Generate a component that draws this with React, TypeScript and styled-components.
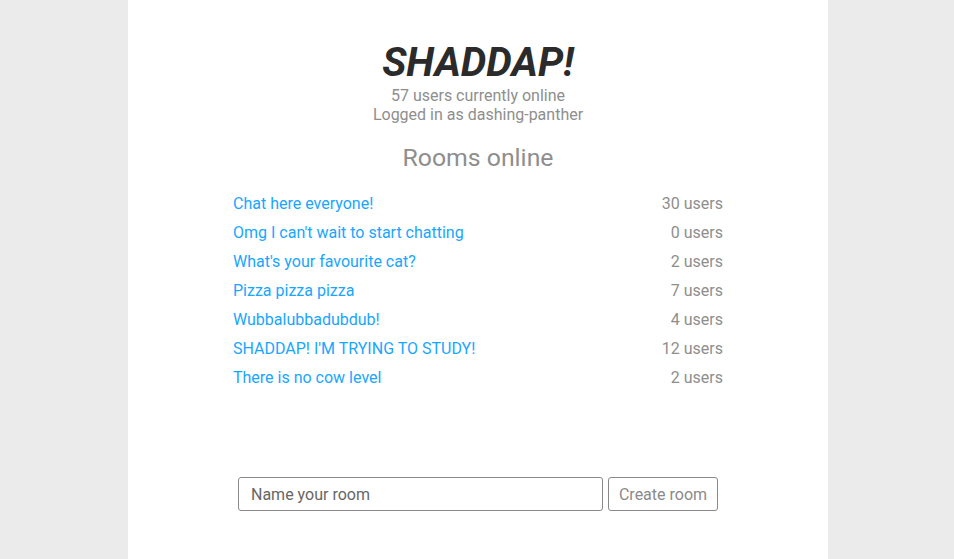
import React from 'react';
import styled, { createGlobalStyle } from 'styled-components';

type Room = {
  name: string;
  users: number;
};

const rooms: Room[] = [
  { name: 'Chat here everyone!', users: 30 },
  { name: "Omg I can't wait to start chatting", users: 0 },
  { name: "What's your favourite cat?", users: 2 },
  { name: 'Pizza pizza pizza', users: 7 },
  { name: 'Wubbalubbadubdub!', users: 4 },
  { name: "SHADDAP! I'M TRYING TO STUDY!", users: 12 },
  { name: 'There is no cow level', users: 2 },
];

const GlobalStyle = createGlobalStyle`
  html, body {
    margin: 0;
    padding: 0;
    background: #ebebeb;
    font-family: Roboto, 'Liberation Sans', sans-serif;
  }
`;

const App = () => {
  return (
    <>
      <GlobalStyle />
      <Page>
        <Header>
          <Title>SHADDAP!</Title>
          <Info>57 users currently online</Info>
          <Info>Logged in as dashing-panther</Info>
        </Header>
        <RoomsTitle>Rooms online</RoomsTitle>
        <RoomList>
          {rooms.map(room => (
            <RoomRow key={room.name}>
              <RoomLink href="#">{room.name}</RoomLink>
              <RoomUsers>{room.users} users</RoomUsers>
            </RoomRow>
          ))}
        </RoomList>
        <CreateForm onSubmit={e => e.preventDefault()}>
          <RoomInput placeholder="Name your room" />
          <CreateButton type="submit">Create room</CreateButton>
        </CreateForm>
      </Page>
    </>
  );
};

const Page = styled.div`
  width: 700px;
  min-height: 100vh;
  margin-left: calc(50% - 349px);
  background: #fff;
  display: flex;
  flex-direction: column;
  align-items: center;
  padding-top: 38px;
  box-sizing: border-box;
`;

const Header = styled.header`
  display: flex;
  flex-direction: column;
  align-items: center;
`;

const Title = styled.h1`
  margin: 0;
  font-size: 40.5px;
  line-height: 48px;
  font-weight: 700;
  font-style: italic;
  color: #2b2b2b;
`;

const Info = styled.div`
  font-size: 16px;
  line-height: 19px;
  color: #8e8e8e;
`;

const RoomsTitle = styled.h2`
  margin: 20px 0 0 0;
  font-size: 24.8px;
  line-height: 28px;
  font-weight: 400;
  color: #8e8e8e;
`;

const RoomList = styled.ul`
  list-style: none;
  margin: 17px 0 0 0;
  padding: 0;
  width: 490px;
`;

const RoomRow = styled.li`
  display: flex;
  justify-content: space-between;
  align-items: center;
  height: 29px;
  font-size: 16px;
`;

const RoomLink = styled.a`
  color: #18a6ff;
  text-decoration: none;
`;

const RoomUsers = styled.span`
  color: #8e8e8e;
`;

const CreateForm = styled.form`
  display: flex;
  gap: 5px;
  margin-top: 85px;
`;

const RoomInput = styled.input`
  width: 365px;
  height: 34px;
  box-sizing: border-box;
  border: 1px solid #8a8a8a;
  border-radius: 3px;
  padding: 0 12px;
  font-family: Roboto, 'Liberation Sans', sans-serif;
  font-size: 16px;
  color: #333;

  &::placeholder {
    color: #666;
  }
`;

const CreateButton = styled.button`
  width: 110px;
  height: 34px;
  box-sizing: border-box;
  border: 1px solid #8a8a8a;
  border-radius: 3px;
  background: #fff;
  font-family: Roboto, 'Liberation Sans', sans-serif;
  font-size: 16px;
  color: #8a8a8a;
  padding: 0;
`;

export default App;
